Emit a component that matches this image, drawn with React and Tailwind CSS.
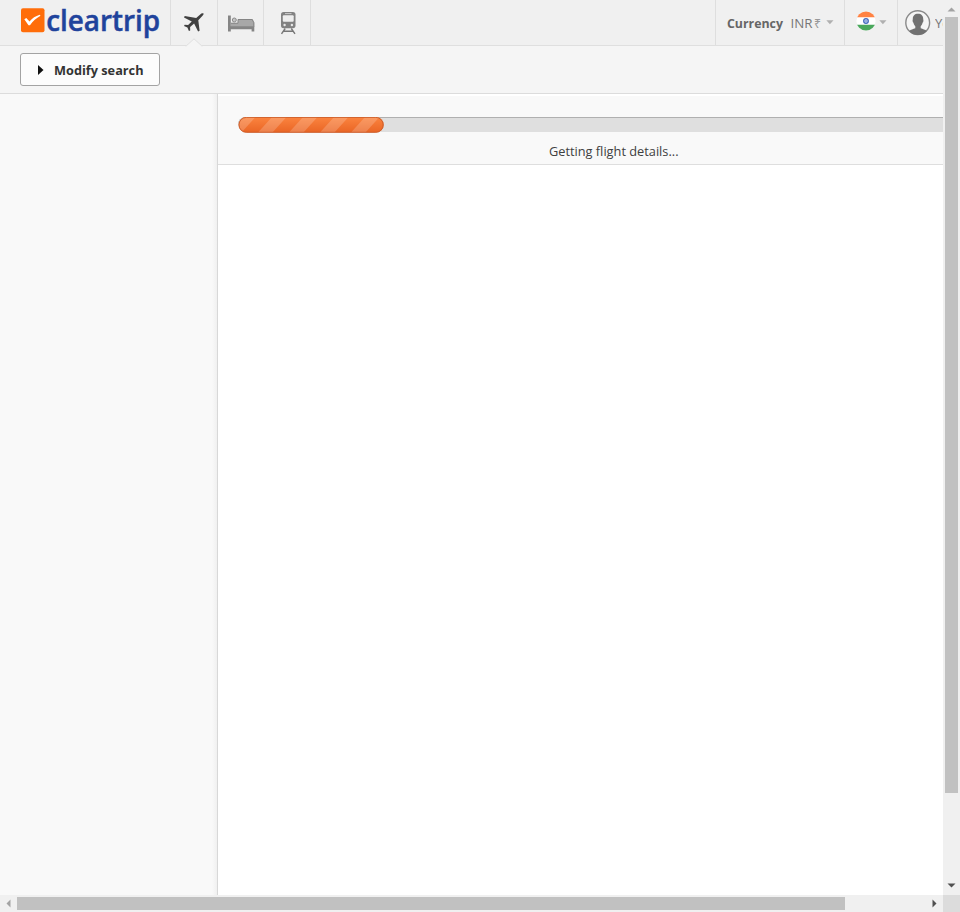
import React from 'react';

function Logo() {
  return (
    <svg width="150" height="40" viewBox="20 0 150 40" className="block shrink-0" aria-label="cleartrip">
      <rect x="21" y="8.300" width="23.5" height="24" rx="2" fill="#ff6d0a" />
      <path d="m24.300 19.200 2-1.200 3.200 3.400c2.800-3.200 6-5.300 10.200-6.600l.8 1c-4.300 2.400-7.500 5.300-10.500 9.400h-1.500Z" fill="#fff" />
      <text x="46.2" y="31" fontSize="29.500" fontWeight="600" fill="#1f439c" textLength="114" lengthAdjust="spacingAndGlyphs" fontFamily='"Open Sans", "Noto Sans", sans-serif' stroke="#1f439c" strokeWidth="0.5">
        cleartrip
      </text>
    </svg>
  );
}

function Plane() {
  return (
    <svg width="22" height="22" viewBox="183 12 22 22" className="block">
      <path d="M203.500 13.600c-.9-.7-2.300-.1-3.300.8l-4 3.600-11.500-1.900-.7 1.500 7.800 3.800-3.700 3.700-3.400-.3-.7 1.200 3.400 1.500 1.500 3.500 1.300-.6-.1-3.400 4-3.500 4 8 1.500-.7-1.300-10.500 4-4.200c.9-1 1.700-2 1.200-2.500Z" fill="#414141" />
    </svg>
  );
}

function Bed() {
  return (
    <svg width="28" height="18" viewBox="227 14 28 18" className="block">
      <path d="M238 19h14.500l1.800 3.500V27H231v-4h7Z" fill="#a8a8a8" />
      <path d="M238 19.500h14.200l1.600 3.200v3.800M231 23.200h7v-3.700" fill="none" stroke="#858585" strokeWidth="1" />
      <path d="M228 15.400h2.800v10.800h23.500v5.300h-2.700v-2.300h-20.800v2.300H228Z" fill="#858585" />
      <circle cx="234.300" cy="20" r="2" fill="#c4c4c4" stroke="#8b8b8b" strokeWidth="1" />
    </svg>
  );
}

function Train() {
  return (
    <svg width="18" height="24" viewBox="279 11 18 24" className="block">
      <rect x="281" y="12" width="14.5" height="16.2" rx="2.6" fill="#828282" />
      <rect x="282.800" y="15.300" width="10.900" height="6.400" rx="1" fill="#eeeeee" />
      <path d="M285 13.6h6.5" stroke="#ccc" strokeWidth="1" />
      <circle cx="284.6" cy="25" r="1.2" fill="#e8e8e8" />
      <circle cx="291.9" cy="25" r="1.2" fill="#e8e8e8" />
      <path d="m285.200 28.5-3.700 5.300m9.800-5.300 3.700 5.300M284 31.200h8.500" fill="none" stroke="#777" strokeWidth="1.4" />
    </svg>
  );
}

function Flag() {
  return (
    <svg width="20" height="20" viewBox="0 0 20 20" className="block">
      <defs>
        <clipPath id="flag-circle"><circle cx="10" cy="10" r="9.6" /></clipPath>
      </defs>
      <g clipPath="url(#flag-circle)">
        <path fill="#fff" d="M0 0h20v20H0z" />
        <path fill="#ff8243" d="M0 0h20v6.300H0z" />
        <path fill="#4aa85c" d="M0 13.700h20V20H0z" />
      </g>
      <circle cx="10" cy="10" r="2.3" fill="#cbd6f5" stroke="#4169bd" strokeWidth="1.3" />
      <circle cx="10" cy="10" r=".7" fill="#4169bd" />
    </svg>
  );
}

function Avatar() {
  return (
    <svg width="26" height="26" viewBox="0 0 26 26" className="block shrink-0">
      <circle cx="12.700" cy="12.700" r="11.900" fill="#f5f5f5" stroke="#8a8a8a" strokeWidth="1.4" />
      <path d="M13 3.800c3.400 0 5.300 2.200 5.200 5.300 0 .7.3 1 .2 1.800-.1.900-.5 1.600-.9 1.900-.3 1.700-1 2.700-1.800 3.400v2.100c2 1 4.700 1.100 6.100 2.900a12 12 0 0 1-17.600 0c1.400-1.800 4.100-1.900 6.100-2.900v-2.100c-.8-.7-1.500-1.700-1.800-3.400-.4-.3-.8-1-.9-1.900-.1-.8.2-1.100.2-1.800-.1-3.100 1.800-5.300 5.200-5.300Z" fill="#717171" />
    </svg>
  );
}

function Caret() {
  return (
    <svg width="8" height="5" viewBox="0 0 8 5" className="block shrink-0">
      <path d="M.3.3h7.200L3.900 4.300Z" fill="#b0b0b0" />
    </svg>
  );
}

function Header() {
  return (
    <header className="flex h-[46px] shrink-0 border-b border-[#dfdfdf] bg-[#f0f0f0]">
      <div className="w-[170px] shrink-0 pl-5"><Logo /></div>
      <nav className="flex shrink-0">
        <a className="relative w-[47px] border-l border-[#dedede] pt-3 pl-3">
          <Plane />
          <svg width="18" height="9" viewBox="0 0 18 9" className="absolute top-[38px] left-[14px]">
            <path d="M0 9 9 .8 18 9Z" fill="#f5f5f5" />
            <path d="M0 7.700h1.500L9 .8l7.500 6.900H18" fill="none" stroke="#dfdfdf" />
          </svg>
        </a>
        <a className="w-[46px] border-l border-[#dedede] pt-[14px] pl-[9px]"><Bed /></a>
        <a className="w-[48px] border-x border-[#dedede] pt-[11px] pl-[15px]"><Train /></a>
      </nav>
      <div className="ml-auto flex shrink-0">
        <div className="flex w-[129px] items-center border-l border-[#dedede] pl-[11px] text-[13px] whitespace-nowrap">
          <svg width="96" height="24" viewBox="0 0 96 24" className="block shrink-0" fontFamily='"Open Sans", "Noto Sans", sans-serif' fontSize="13">
            <text x="0" y="17" fontWeight="700" fill="#666" textLength="56" lengthAdjust="spacingAndGlyphs">Currency</text>
            <text x="63.500" y="17" fill="#777" textLength="22" lengthAdjust="spacingAndGlyphs">INR</text>
            <text x="87" y="17" fill="#999" textLength="7" lengthAdjust="spacingAndGlyphs">₹</text>
          </svg>
          <span className="ml-[3px]"><Caret /></span>
        </div>
        <div className="flex w-[53px] border-l border-[#dedede] pt-[11px] pl-[11px]">
          <Flag />
          <span className="mt-[9px] ml-[3px]"><Caret /></span>
        </div>
        <div className="flex w-[46px] overflow-hidden border-l border-[#dedede] pt-[10px] pl-[7px] font-['Open_Sans','Noto_Sans',sans-serif]">
          <Avatar />
          <span className="mt-1 ml-1 w-[8px] shrink-0 overflow-hidden text-[13px] leading-[18px] whitespace-nowrap text-[#777]">Yo</span>
        </div>
      </div>
    </header>
  );
}

function Progress() {
  return (
    <section className="h-[71px] overflow-hidden border-b border-[#dedede] bg-[#f9f9f9]">
      <div className="h-[2px] bg-white" />
      <div className="mt-[21px] ml-5 h-[15px] rounded-l-full border-t border-[#b0b0b0] bg-[#dfdfdf]">
        <svg width="146" height="16" viewBox="0 0 146 16" className="-mt-px block">
          <defs>
            <linearGradient id="bar-orange" x2="0" y2="1"><stop stopColor="#fb843f" /><stop offset="1" stopColor="#e96424" /></linearGradient>
            <clipPath id="bar-clip"><rect x=".7" width="145" height="15.500" rx="7.500" /></clipPath>
          </defs>
          <g clipPath="url(#bar-clip)">
            <path d="M0 0h146v16H0Z" fill="url(#bar-orange)" />
            {[0, 31, 62, 93, 124].map((x) => (
              <path key={x} transform={`translate(${x} 0)`} d="M3 0h14.500L3 16h-14.500Z" fill="#fff" opacity=".19" />
            ))}
          </g>
          <rect x="1" y=".4" width="144.200" height="14.900" rx="7.400" fill="none" stroke="#ca5c2b" strokeWidth=".9" />
        </svg>
      </div>
      <div className="mt-[9px] flex justify-center pl-[67px]">
        <svg width="132" height="20" viewBox="0 0 132 20" className="block">
          <text x="1" y="15" fontFamily='"Open Sans", "Noto Sans", sans-serif' fontSize="13" fill="#404040" textLength="129.500" lengthAdjust="spacingAndGlyphs">Getting flight details...</text>
        </svg>
      </div>
    </section>
  );
}

function Arrow({ d, fill, className }) {
  return <svg width="9" height="9" viewBox="0 0 9 9" className={className}><path d={d} fill={fill} /></svg>;
}

export default function App() {
  return (
    <div className="grid h-[912px] w-[960px] grid-cols-[943px_17px] grid-rows-[895px_17px] overflow-hidden bg-white">
      <div className="flex min-w-0 flex-col overflow-hidden">
        <Header />
        <div className="h-12 shrink-0 border-b border-[#dcdcdc] bg-[#f5f5f5] pt-[7px] pl-[20px]">
          <button className="flex h-[33px] w-[140px] items-center rounded-[3px] border border-[#a3a3a3] bg-[#fcfcfc] pl-4">
            <svg width="7" height="10" viewBox="0 0 7 10" className="block"><path d="M1 0v10l5.500-5Z" fill="#111" /></svg>
            <svg width="94" height="22" viewBox="0 0 94 22" className="ml-[9px] block">
              <text x="1" y="16" fontFamily='"Open Sans", "Noto Sans", sans-serif' fontSize="13" fontWeight="700" fill="#333" textLength="89.500" lengthAdjust="spacingAndGlyphs">Modify search</text>
            </svg>
          </button>
        </div>
        <div className="flex min-h-0 flex-1">
          <aside className="w-[218px] shrink-0 border-r border-[#d8d8d8] bg-[#f9f9f9] bg-[linear-gradient(to_left,#f0f0f0,#f9f9f9_5px)]" />
          <main className="min-w-0 flex-1 bg-white"><Progress /></main>
        </div>
      </div>
      <div className="flex flex-col items-center bg-[#f0f0f0]">
        <Arrow d="M.5 6.500h8l-4-4Z" fill="#a3a3a3" className="mt-[5px] block shrink-0" />
        <div className="mt-[3px] h-[776px] w-[13px] bg-[#c1c1c1]" />
        <Arrow d="M.5 2.500h8l-4 4Z" fill="#505050" className="mt-auto mb-[5px] block shrink-0" />
      </div>
      <div className="flex items-center bg-[#f0f0f0]">
        <Arrow d="M6.500.5v8l-4-4Z" fill="#a3a3a3" className="ml-1 block shrink-0" />
        <div className="ml-[4px] h-[13px] w-[828px] bg-[#c1c1c1]" />
        <Arrow d="M2.500.5v8l4-4Z" fill="#505050" className="mr-[4px] ml-auto block shrink-0" />
      </div>
      <div className="bg-[#dcdcdc]" />
    </div>
  );
}
